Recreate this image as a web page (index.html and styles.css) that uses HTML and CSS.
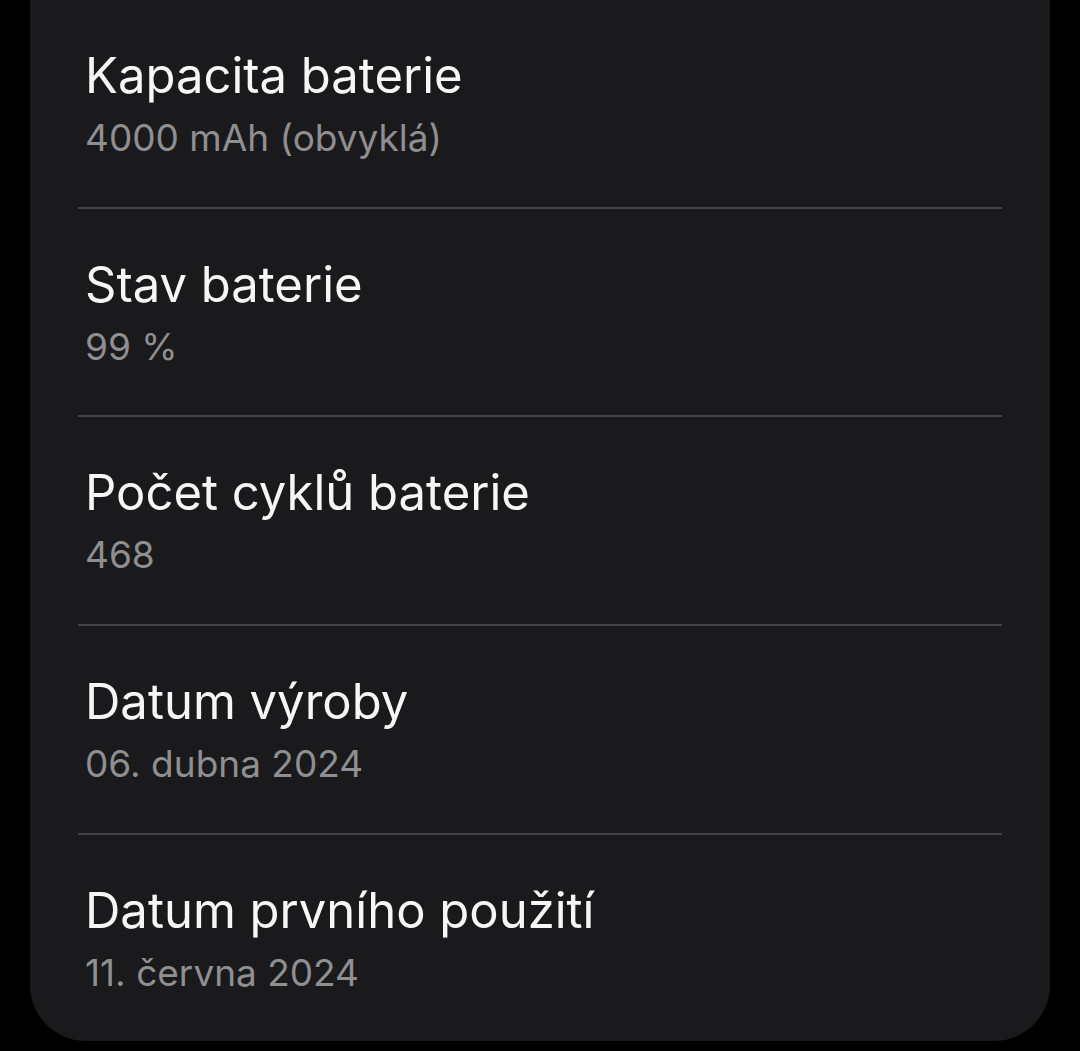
FILE: index.html
```html
<!DOCTYPE html>
<html lang="cs">
<head>
<meta charset="UTF-8">
<meta name="viewport" content="width=device-width, initial-scale=1.0">
<title>Informace o baterii</title>
<link rel="stylesheet" href="styles.css">
</head>
<body>
<div class="card">
    <div class="row">
        <div class="title">Kapacita baterie</div>
        <div class="value">4000 mAh (obvyklá)</div>
    </div>
    <div class="divider"></div>
    <div class="row">
        <div class="title">Stav baterie</div>
        <div class="value">99 %</div>
    </div>
    <div class="divider"></div>
    <div class="row">
        <div class="title">Počet cyklů baterie</div>
        <div class="value">468</div>
    </div>
    <div class="divider"></div>
    <div class="row">
        <div class="title">Datum výroby</div>
        <div class="value">06. dubna 2024</div>
    </div>
    <div class="divider"></div>
    <div class="row">
        <div class="title">Datum prvního použití</div>
        <div class="value">11. června 2024</div>
    </div>
</div>
</body>
</html>
```

FILE: styles.css
```css
body {
    margin: 0;
    padding: 0;
    background-color: #000;
    font-family: Inter, "Noto Sans", sans-serif;
}
.card {
    margin: 0 30px;
    background-color: #1a1a1c;
    border-radius: 0 0 56px 56px;
    display: flex;
    flex-direction: column;
}
.row {
    height: 206.67px;
    box-sizing: border-box;
    padding: 46px 0 0 55px;
}
.title {
    color: #f6f6f6;
    font-size: 49px;
    line-height: 60px;
}
.value {
    color: #8f8f91;
    font-size: 37px;
    line-height: 63px;
}
.divider {
    height: 2px;
    margin: 0 48px;
    background-color: #434345;
}
```
